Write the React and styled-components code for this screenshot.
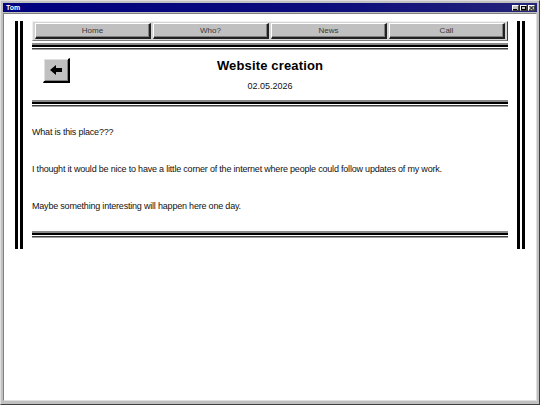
import React from 'react';
import styled, { createGlobalStyle } from 'styled-components';

const Global = createGlobalStyle`
  html, body { margin: 0; padding: 0; background: #c0c0c0; }
  body { font-family: "Liberation Sans", Arial, sans-serif; }
  * { box-sizing: border-box; }
`;

const Window = styled.div`
  width: 540px;
  height: 405px;
  background: #c0c0c0;
  border-top: 1px solid #dfdfdf;
  border-left: 1px solid #dfdfdf;
  border-right: 1px solid #404040;
  border-bottom: 1px solid #404040;
  padding: 1px 2px 3px 2px;
  display: flex;
  flex-direction: column;
`;

const TitleBar = styled.div`
  height: 9px;
  margin: 1px 0 1px 0;
  background: linear-gradient(90deg, #000080 0%, #0c0c7c 60%, #24247a 100%);
  display: flex;
  align-items: center;
  justify-content: space-between;
  padding: 0 2px 0 3px;
`;

const TitleText = styled.span`
  color: #fff;
  font-size: 7px;
  font-weight: bold;
  line-height: 9px;
`;

const Controls = styled.div`
  display: flex;
  gap: 1px;
`;

const CtrlButton = styled.div`
  width: 7px;
  height: 6px;
  background: #c0c0c0;
  border-top: 1px solid #fff;
  border-left: 1px solid #fff;
  border-right: 1px solid #404040;
  border-bottom: 1px solid #404040;
  display: flex;
  align-items: center;
  justify-content: center;
`;

const Client = styled.div`
  flex: 1;
  background: #fff;
  border-top: 1px solid #808080;
  border-left: 1px solid #808080;
  border-right: 1px solid #dfdfdf;
  border-bottom: 1px solid #dfdfdf;
`;

const Frame = styled.div`
  display: flex;
  gap: 9px;
  margin: 7px 0 0 11px;
  width: 510px;
`;

const Bars = styled.div`
  width: 8px;
  flex: none;
  background: linear-gradient(90deg, #000 0 3px, #fff 3px 5px, #000 5px 8px);
`;

const Content = styled.div`
  width: 476px;
  display: flex;
  flex-direction: column;
  padding-bottom: 11px;
`;

const Nav = styled.nav`
  height: 20px;
  display: grid;
  grid-template-columns: repeat(4, 1fr);
  gap: 2px;
  padding: 1px 2px 1px 2px;
  background: #d4d4d4;
  border-top: 1px solid #f0f0f0;
  border-left: 1px solid #f0f0f0;
  border-right: 1px solid #404040;
  border-bottom: 1px solid #808080;
`;

const NavButton = styled.a`
  display: flex;
  align-items: center;
  justify-content: center;
  background: #c0c0c0;
  border-top: 1px solid #fff;
  border-left: 1px solid #fff;
  border-right: 2px solid #202020;
  border-bottom: 2px solid #202020;
  box-shadow: inset -1px -1px 0 #808080;
  color: #3a3a3a;
  font-size: 8px;
  text-decoration: none;
  cursor: pointer;
`;

const Rule = styled.div`
  height: 7px;
  margin-top: ${p => p.$top || 0}px;
  background: linear-gradient(180deg,
    #8a8a8a 0 2px,
    #000 2px 4px,
    #fff 4px 5px,
    #404040 5px 6px,
    #a0a0a0 6px 7px);
`;

const Header = styled.header`
  display: grid;
  grid-template-columns: 1fr auto 1fr;
  align-items: start;
  padding: 8px 0 9px 11px;
`;

const BackButton = styled.button`
  width: 27px;
  height: 25px;
  padding: 0;
  background: #c0c0c0;
  border-top: 1px solid #fff;
  border-left: 1px solid #fff;
  border-right: 2px solid #000;
  border-bottom: 2px solid #000;
  box-shadow: inset 1px 1px 0 #dfdfdf, inset -1px -1px 0 #808080;
  display: flex;
  align-items: center;
  justify-content: center;
  cursor: pointer;
`;

const TitleBlock = styled.div`
  display: flex;
  flex-direction: column;
  align-items: center;
  margin-right: 11px;
`;

const Title = styled.h1`
  margin: 0;
  font-size: 13px;
  line-height: 15px;
  font-weight: bold;
  letter-spacing: 0.15px;
  color: #000;
`;

const DateText = styled.div`
  margin-top: 8px;
  font-size: 9px;
  line-height: 10px;
  color: #111;
`;

const Body = styled.main`
  display: flex;
  flex-direction: column;
  gap: 26px;
  padding: 20px 0 19px 0;
`;

const Para = styled.p`
  margin: 0;
  font-size: 9px;
  line-height: 11px;
  letter-spacing: -0.2px;
  color: #111;
`;

export default function App() {
  return (
    <>
      <Global />
      <Window>
        <TitleBar>
          <TitleText>Tom</TitleText>
          <Controls>
            <CtrlButton>
              <svg width="5" height="4" viewBox="0 0 5 4"><rect x="0" y="3" width="4" height="1" fill="#000" /></svg>
            </CtrlButton>
            <CtrlButton>
              <svg width="5" height="4" viewBox="0 0 5 4"><rect x="0.5" y="0.5" width="4" height="3" fill="none" stroke="#000" strokeWidth="1" /></svg>
            </CtrlButton>
            <CtrlButton>
              <svg width="5" height="4" viewBox="0 0 5 4"><path d="M0.5 0 L4.5 4 M4.5 0 L0.5 4" stroke="#000" strokeWidth="1" /></svg>
            </CtrlButton>
          </Controls>
        </TitleBar>
        <Client>
          <Frame>
            <Bars />
            <Content>
              <Nav>
                <NavButton>Home</NavButton>
                <NavButton>Who?</NavButton>
                <NavButton>News</NavButton>
                <NavButton>Call</NavButton>
              </Nav>
              <Rule $top={2} />
              <Header>
                <BackButton aria-label="Back">
                  <svg width="13" height="10" viewBox="0 0 13 10">
                    <path d="M0 5 L6 0 L6 3 L12 3 L12 7 L6 7 L6 10 Z" fill="#000" />
                  </svg>
                </BackButton>
                <TitleBlock>
                  <Title>Website creation</Title>
                  <DateText>02.05.2026</DateText>
                </TitleBlock>
                <div />
              </Header>
              <Rule />
              <Body>
                <Para>What is this place???</Para>
                <Para>I thought it would be nice to have a little corner of the internet where people could follow updates of my work.</Para>
                <Para>Maybe something interesting will happen here one day.</Para>
              </Body>
              <Rule />
            </Content>
            <Bars />
          </Frame>
        </Client>
      </Window>
    </>
  );
}
